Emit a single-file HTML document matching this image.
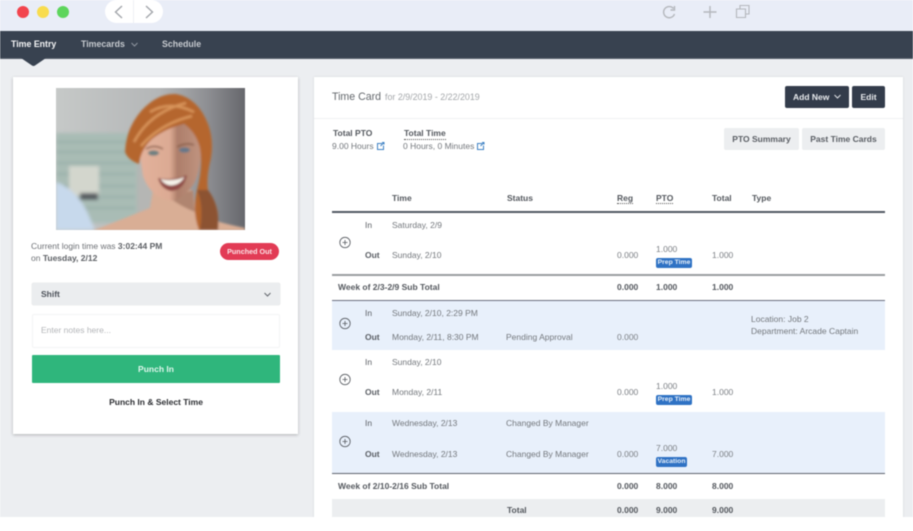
<!DOCTYPE html>
<html><head><meta charset="utf-8"><style>
html,body{margin:0;padding:0;background:#fff}
#p{position:relative;width:913px;height:531px;overflow:hidden;background:#fff;font-family:"Liberation Sans",sans-serif;filter:blur(.4px)}
#p div,#p span.t{position:absolute}
.t{white-space:nowrap;font-size:8.5px;line-height:11px;color:#74787d}
.b{font-weight:bold;color:#54585e}
.k{color:#5c6066}
.m{color:#7d8186}
.bdg{position:absolute;height:10px;background:#2f72c4;border-radius:2px;color:#e6eff9;font-size:6.800px;font-weight:bold;line-height:10px;text-align:center}
</style></head><body><div id="p">
<div style="left:0;top:0;width:913px;height:31px;background:#e9edf7"></div>
<div style="left:17px;top:6px;width:12px;height:12px;border-radius:50%;background:#f2444e"></div>
<div style="left:37px;top:6px;width:12px;height:12px;border-radius:50%;background:#f8dc4e"></div>
<div style="left:57px;top:6px;width:12px;height:12px;border-radius:50%;background:#5dd55c"></div>
<div style="left:105px;top:0;width:58px;height:23px;border-radius:12px;background:#fff"></div>
<div style="left:133px;top:0;width:1px;height:23px;background:#eef0f4"></div>
<svg style="position:absolute;left:0;top:0" width="913" height="31" fill="none" stroke="#a3a6ab" stroke-width="1.4">
<path d="M122 6L115.500 12L122 18M146 6L152.500 12L146 18"/>
<path stroke="#b4b7bc" d="M673.500 8.500A5.600 5.600 0 1 0 674.500 14M674.500 6V10H670.500"/>
<path stroke="#b4b7bc" d="M710 6V18M703.500 12H716.500"/>
<path stroke="#b4b7bc" stroke-width="1.1" d="M736.500 9H745.500V17.500H736.500ZM740 9V5.500H749V14H745.500"/>
</svg>
<div style="left:0;top:59px;width:913px;height:458px;background:#eceef1"></div>
<div style="left:0;top:31px;width:913px;height:28px;background:#384250;border-bottom:1px solid #59616c;box-sizing:border-box"></div>
<svg style="position:absolute;left:0;top:58px" width="60" height="9"><path d="M21 0H46L35 7.500Q33.500 8.500 32 7.500Z" fill="#384250"/></svg>
<span class="t" style="left:11px;top:38.500px;font-size:8.800px;font-weight:bold;color:#f4f5f6">Time Entry</span>
<span class="t" style="left:81px;top:38.500px;font-size:8.800px;font-weight:bold;color:#c6cacf">Timecards</span>
<svg style="position:absolute;left:130px;top:41.500px" width="9" height="6" fill="none" stroke="#8f96a0"><path d="M1.500 1L4.500 4L7.500 1"/></svg>
<span class="t" style="left:162px;top:38.500px;font-size:8.800px;font-weight:bold;color:#c6cacf">Schedule</span>

<div style="left:13px;top:77px;width:285px;height:357px;background:#fff;box-shadow:0 1px 3px rgba(0,0,0,.25)"></div>
<svg style="position:absolute;left:56px;top:88px" width="189" height="142" viewBox="56 88 189 142">
<defs><linearGradient id="bg" x1="0" x2="1" y1="0" y2="0"><stop offset="0" stop-color="#c6c9c8"/><stop offset=".55" stop-color="#b4b6b7"/><stop offset=".8" stop-color="#8e8f93"/><stop offset="1" stop-color="#66676c"/></linearGradient>
<linearGradient id="sk" x1="0" x2="1" y1="0" y2="0"><stop offset="0" stop-color="#e3b29c"/><stop offset=".5" stop-color="#dcaa93"/><stop offset=".62" stop-color="#ad7e6a"/><stop offset="1" stop-color="#c09480"/></linearGradient>
<filter id="f1"><feGaussianBlur stdDeviation="1.800"/></filter><filter id="f2"><feGaussianBlur stdDeviation="1"/></filter></defs>
<rect x="56" y="88" width="189" height="142" fill="url(#bg)"/>
<g filter="url(#f1)">
<rect x="56" y="133" width="82" height="90" fill="#a9bcb5"/>
<path d="M56 142H130M56 152H135M56 163H135M56 174H135M56 186H135M56 197H135M56 208H135" stroke="#98aea8" stroke-width="2"/>
<rect x="69" y="166" width="30" height="30" fill="#d3d6cd"/>
<rect x="80" y="193" width="18" height="7" fill="#565c60"/>
<rect x="137" y="130" width="22" height="95" fill="#b5b6b4"/>
<path d="M56 182Q78 190 89 216L95 230H56Z" fill="#c7d9ec"/>
</g>
<g filter="url(#f2)">
<path d="M92 231Q125 218 150 208L153 190H193L196 214Q215 222 245 228V231Z" fill="#d9ae95"/>
<path d="M170 198L193 190L195 212Q180 206 170 198Z" fill="#b08570"/>
<path d="M139 150Q140 128 168 122Q197 122 201 146Q201 176 191 188Q178 203 168 200Q150 196 143 176Z" fill="url(#sk)"/>
<path d="M125 152Q126 128 142 110Q158 93 176 94Q198 98 208 124Q214 140 211 158Q206 178 208 190Q219 206 218 220L213 230H199Q192 212 197 190Q203 168 200 148Q196 132 184 124Q166 128 152 139Q141 149 139 164Q128 160 125 152Z" fill="#b5662f"/>
<path d="M197 190Q204 205 200 230H218Q220 205 208 190Z" fill="#8c5232"/>
<path d="M134 142Q150 112 186 103M141 146Q160 124 192 116M150 112Q170 100 194 112" stroke="#d8945a" stroke-width="2.500" fill="none"/>
<path d="M146 149Q154 144 163 149M177 147Q186 142 194 145" stroke="#845a46" stroke-width="1.400" fill="none"/>
<ellipse cx="153.500" cy="153" rx="5.500" ry="2.600" fill="#6d7f80"/><ellipse cx="184.500" cy="150" rx="5.500" ry="2.600" fill="#66788a"/>
<path d="M158 178Q172 181 187 175Q184 190 171 191Q161 189 158 178Z" fill="#8f4a44"/>
<path d="M160.500 179Q172 182 184.500 177Q180 185 171 185.500Q164 185 160.500 179Z" fill="#f6f3ea"/>
</g>
</svg>
<span class="t" style="left:31px;top:241px;color:#6e7176">Current login time was <b style="color:#5e6166">3:02:44 PM</b></span>
<span class="t" style="left:31px;top:253px;color:#6e7176">on <b style="color:#5e6166">Tuesday, 2/12</b></span>
<div style="left:220px;top:243px;width:59px;height:17px;background:#e23b55;border-radius:8.500px;color:#fbe4e7;font-size:7.200px;font-weight:bold;line-height:17px;text-align:center">Punched Out</div>
<div style="left:32px;top:283px;width:248px;height:22px;background:#ebedef;border-radius:2px;box-shadow:0 0 1px rgba(0,0,0,.25)"></div>
<span class="t" style="left:41px;top:289px;font-weight:bold;color:#4d525a">Shift</span>
<svg style="position:absolute;left:263px;top:292px" width="9" height="6" fill="none" stroke="#62666c" stroke-width="1"><path d="M1.500 1L4.500 4L7.500 1"/></svg>
<div style="left:32px;top:314px;width:246px;height:32px;background:#fff;border:1px solid #f3f4f5;border-radius:2px"></div>
<span class="t" style="left:41px;top:325px;color:#b4b6b9">Enter notes here...</span>
<div style="left:32px;top:355px;width:248px;height:28px;background:#2fb67c;border-radius:1px;color:#dff6ec;font-size:8.500px;font-weight:bold;line-height:28px;text-align:center">Punch In</div>
<div style="left:32px;top:397px;width:248px;text-align:center;font-size:8.500px;line-height:11px;font-weight:bold;color:#2b2d31">Punch In &amp; Select Time</div>

<div style="left:314px;top:77px;width:589px;height:454px;background:#fff;box-shadow:0 0 2px rgba(0,0,0,.12)"></div>
<div style="left:0;top:517px;width:913px;height:14px;background:#fff"></div>
<div style="left:314px;top:118px;width:589px;height:1px;background:#f0f1f3"></div>
<span class="t" style="left:332px;top:91px;font-size:10.600px;line-height:13px;color:#63676c">Time Card</span>
<span class="t" style="left:385px;top:92px;color:#a4a7aa;font-size:8.900px">for 2/9/2019 - 2/22/2019</span>
<div style="left:785px;top:86px;width:64px;height:22px;background:#333c4b;border-radius:2px"></div>
<span class="t" style="left:793px;top:92px;font-weight:bold;color:#e8eaed">Add New</span>
<svg style="position:absolute;left:833px;top:94px" width="9" height="6" fill="none" stroke="#dfe2e6"><path d="M1.500 1L4.500 4L7.500 1"/></svg>
<div style="left:852px;top:86px;width:33px;height:22px;background:#333c4b;border-radius:2px;color:#e8eaed;font-size:8.500px;font-weight:bold;line-height:22px;text-align:center">Edit</div>
<div style="left:724px;top:128px;width:75px;height:22px;background:#eceef0;border-radius:2px;color:#5a5e64;font-size:8.500px;font-weight:bold;line-height:22px;text-align:center">PTO Summary</div>
<div style="left:802px;top:128px;width:83px;height:22px;background:#eceef0;border-radius:2px;color:#5a5e64;font-size:8.500px;font-weight:bold;line-height:22px;text-align:center">Past Time Cards</div>
<span class="t b" style="left:333px;top:128px">Total PTO</span>
<span class="t" style="left:332px;top:141px">9.00 Hours</span>
<span class="t b" style="left:404px;top:128px;border-bottom:1px dotted #555">Total Time</span>
<span class="t" style="left:403px;top:141px">0 Hours, 0 Minutes</span>
<svg style="position:absolute;left:376px;top:141px" width="110" height="10" fill="none" stroke="#3f82c4"><path d="M6 2.500H1.500V8.500H7.500V4.500M4.500 5L8 1.500M6 1.500H8V3.500"/><path d="M106 2.500H101.500V8.500H107.500V4.500M104.500 5L108 1.500M106 1.500H108V3.500"/></svg>

<span class="t b" style="left:392px;top:193px">Time</span>
<span class="t b" style="left:507px;top:193px">Status</span>
<span class="t b" style="left:617px;top:193px;border-bottom:1px dotted #555;line-height:10px">Reg</span>
<span class="t b" style="left:656px;top:193px;border-bottom:1px dotted #555;line-height:10px">PTO</span>
<span class="t b" style="left:712px;top:193px">Total</span>
<span class="t b" style="left:752px;top:193px">Type</span>
<div style="left:332px;top:211px;width:553px;height:2px;background:#535963"></div>
<div style="left:332px;top:274px;width:553px;height:2px;background:#9a9da1"></div>
<div style="left:332px;top:300px;width:553px;height:50px;background:#e8f0fb;border-top:1px solid #6b7080;box-sizing:border-box"></div>
<div style="left:332px;top:412px;width:553px;height:61px;background:#e8f0fb"></div>
<div style="left:332px;top:473px;width:553px;height:1px;background:#5f6470"></div>
<div style="left:332px;top:499px;width:553px;height:18px;background:#eceef0"></div>

<svg style="position:absolute;left:339px;top:236px" width="12" height="220" fill="none" stroke="#55595f" stroke-width=".8">
<g><circle cx="6" cy="6.500" r="5.200"/><path d="M6 4V9M3.500 6.500H8.500"/></g>
<g transform="translate(0,81)"><circle cx="6" cy="6.500" r="5.200"/><path d="M6 4V9M3.500 6.500H8.500"/></g>
<g transform="translate(0,137)"><circle cx="6" cy="6.500" r="5.200"/><path d="M6 4V9M3.500 6.500H8.500"/></g>
<g transform="translate(0,199)"><circle cx="6" cy="6.500" r="5.200"/><path d="M6 4V9M3.500 6.500H8.500"/></g>
</svg>

<span class="t k" style="left:365px;top:220px">In</span><span class="t" style="left:392px;top:220px">Saturday, 2/9</span>
<span class="t k" style="left:365px;top:250px;font-weight:bold">Out</span><span class="t" style="left:392px;top:250px">Sunday, 2/10</span>
<span class="t m" style="left:617px;top:250px">0.000</span><span class="t m" style="left:656px;top:244px">1.000</span><span class="t m" style="left:712px;top:250px">1.000</span>
<span class="bdg" style="left:656px;top:258px;width:36px">Prep Time</span>

<span class="t b" style="left:338px;top:282px">Week of 2/3-2/9 Sub Total</span>
<span class="t b" style="left:617px;top:282px">0.000</span><span class="t b" style="left:656px;top:282px">1.000</span><span class="t b" style="left:712px;top:282px">1.000</span>

<span class="t k" style="left:365px;top:308px">In</span><span class="t" style="left:392px;top:308px">Sunday, 2/10, 2:29 PM</span>
<span class="t k" style="left:365px;top:332px;font-weight:bold">Out</span><span class="t" style="left:392px;top:332px">Monday, 2/11, 8:30 PM</span>
<span class="t" style="left:506px;top:332px">Pending Approval</span><span class="t m" style="left:617px;top:332px">0.000</span>
<span class="t" style="left:751px;top:314px">Location: Job 2</span><span class="t" style="left:751px;top:326px">Department: Arcade Captain</span>

<span class="t k" style="left:365px;top:357px">In</span><span class="t" style="left:392px;top:357px">Sunday, 2/10</span>
<span class="t k" style="left:365px;top:387px;font-weight:bold">Out</span><span class="t" style="left:392px;top:387px">Monday, 2/11</span>
<span class="t m" style="left:617px;top:387px">0.000</span><span class="t m" style="left:656px;top:381px">1.000</span><span class="t m" style="left:712px;top:387px">1.000</span>
<span class="bdg" style="left:656px;top:395px;width:36px">Prep Time</span>

<span class="t k" style="left:365px;top:418px">In</span><span class="t" style="left:392px;top:418px">Wednesday, 2/13</span><span class="t" style="left:506px;top:418px">Changed By Manager</span>
<span class="t k" style="left:365px;top:449px;font-weight:bold">Out</span><span class="t" style="left:392px;top:449px">Wednesday, 2/13</span><span class="t" style="left:506px;top:449px">Changed By Manager</span>
<span class="t m" style="left:617px;top:449px">0.000</span><span class="t m" style="left:656px;top:443px">7.000</span><span class="t m" style="left:712px;top:449px">7.000</span>
<span class="bdg" style="left:656px;top:457px;width:31px">Vacation</span>

<span class="t b" style="left:338px;top:481px">Week of 2/10-2/16 Sub Total</span>
<span class="t b" style="left:617px;top:481px">0.000</span><span class="t b" style="left:656px;top:481px">8.000</span><span class="t b" style="left:712px;top:481px">8.000</span>
<span class="t b" style="left:507px;top:505px">Total</span>
<span class="t b" style="left:617px;top:505px">0.000</span><span class="t b" style="left:656px;top:505px">9.000</span><span class="t b" style="left:712px;top:505px">9.000</span>
</div></body></html>
